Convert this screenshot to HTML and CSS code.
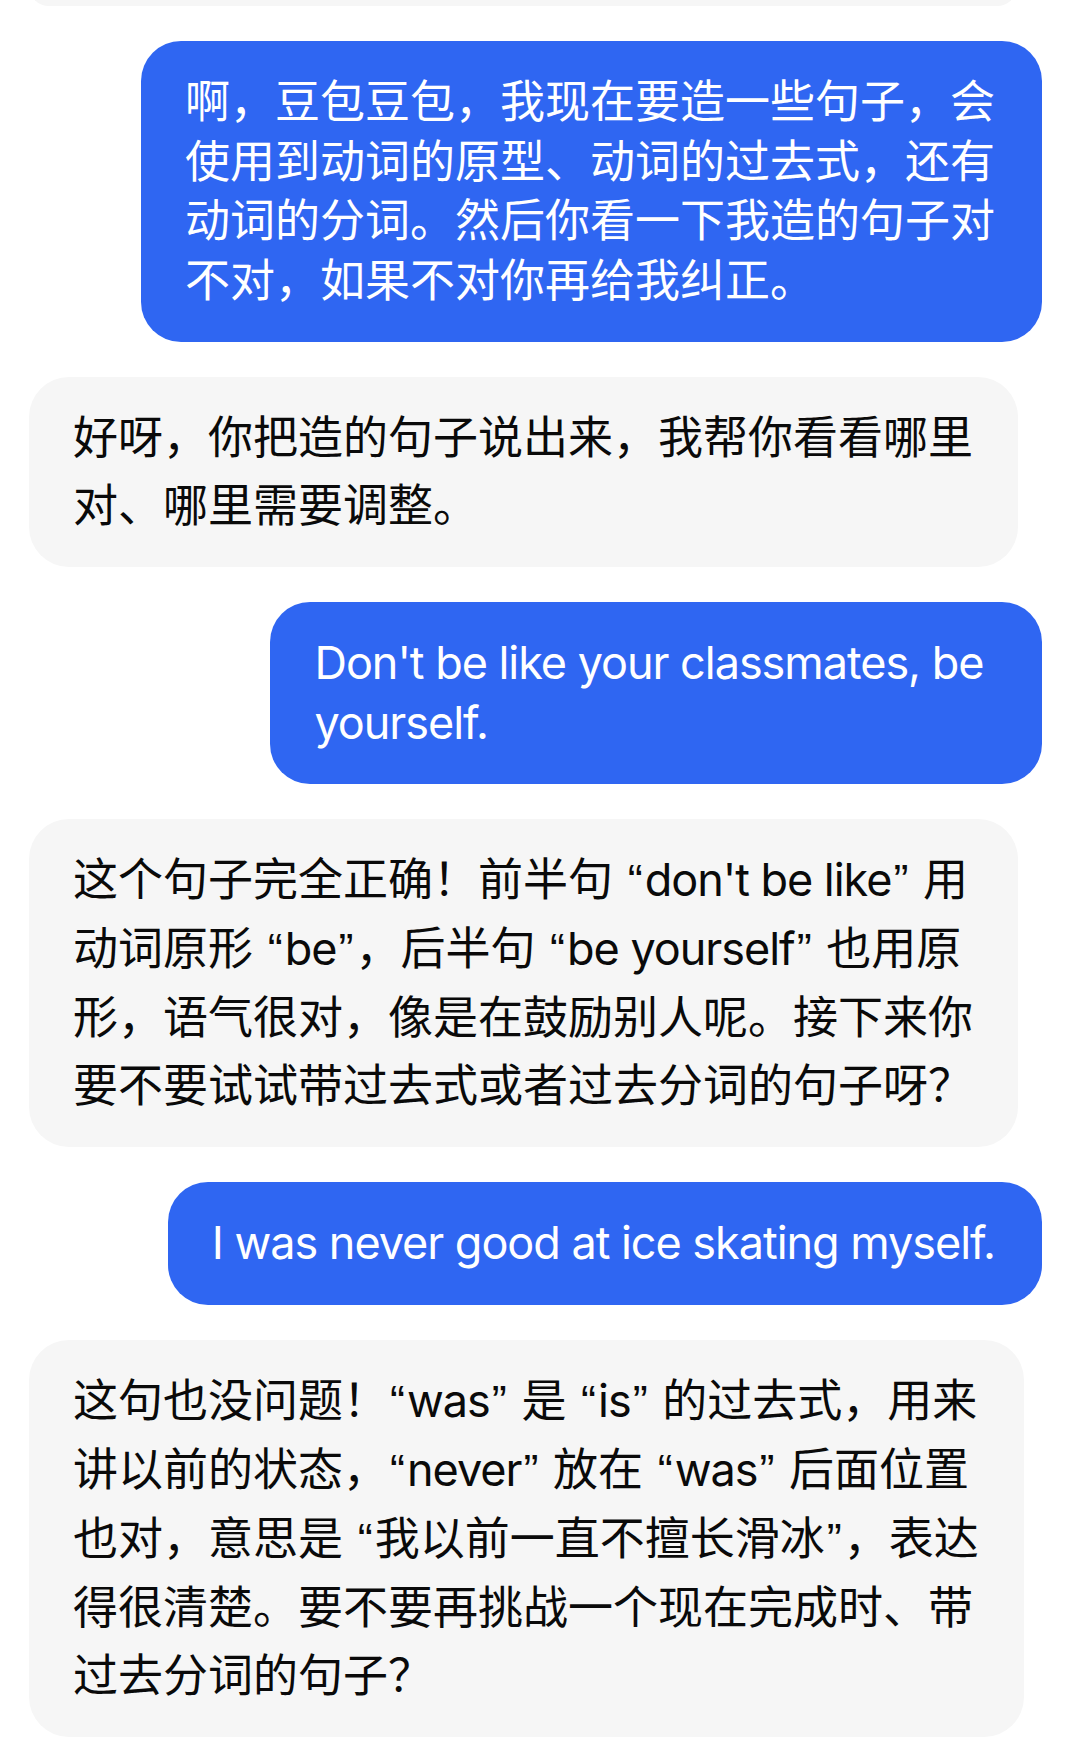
FILE: index.html
```html
<!DOCTYPE html>
<html lang="zh-CN">
<head>
<meta charset="utf-8">
<title>Chat</title>
<link rel="stylesheet" href="styles.css">
</head>
<body>
<div class="chat">
  <div class="msg bot peek"></div>
  <div class="msg user">啊，豆包豆包，我现在要造一些句子，会<br>使用到动词的原型、动词的过去式，还有<br>动词的分词。然后你看一下我造的句子对<br>不对，如果不对你再给我纠正。</div>
  <div class="msg bot">好呀，你把造的句子说出来，我帮你看看哪里<br>对、哪里需要调整。</div>
  <div class="msg user en">Don't be like your classmates, be&nbsp;<br>yourself.</div>
  <div class="msg bot">这个句子完全正确！前半句 <span class="q">“</span><span class="en">don't be like</span><span class="q">”</span> 用<br>动词原形 <span class="q">“</span><span class="en">be</span><span class="q">”</span>，后半句 <span class="q">“</span><span class="en">be yourself</span><span class="q">”</span> 也用原<br>形，语气很对，像是在鼓励别人呢。接下来你<br>要不要试试带过去式或者过去分词的句子呀？</div>
  <div class="msg user en">I was never good at ice skating myself.</div>
  <div class="msg bot">这句也没问题！<span class="q">“</span><span class="en">was</span><span class="q">”</span> 是 <span class="q">“</span><span class="en">is</span><span class="q">”</span> 的过去式，用来<br>讲以前的状态，<span class="q">“</span><span class="en">never</span><span class="q">”</span> 放在 <span class="q">“</span><span class="en">was</span><span class="q">”</span> 后面位置<br>也对，意思是 <span class="q">“</span>我以前一直不擅长滑冰<span class="q">”</span>，表达<br>得很清楚。要不要再挑战一个现在完成时、带<br>过去分词的句子？</div>
</div>
</body>
</html>
```

FILE: styles.css
```css
html, body {
  margin: 0;
  padding: 0;
  background: #ffffff;
}

body {
  font-family: "Inter", "Noto Sans CJK SC", sans-serif;
  font-size: 45px;
  -webkit-font-smoothing: antialiased;
}

.chat {
  display: flex;
  flex-direction: column;
  gap: 35px;
  padding: 0 34px 40px 29px;
  margin-top: -34px;
}

.msg {
  width: fit-content;
  max-width: 1010px;
  border-radius: 40px;
  box-sizing: border-box;
  white-space: nowrap;
}

.user {
  align-self: flex-end;
  background: #2f66f2;
  color: #ffffff;
  line-height: 59.5px;
  padding: 31px 47px 32px 44px;
}

.bot {
  align-self: flex-start;
  background: #f6f6f6;
  color: #0a0a0a;
  line-height: 68px;
  padding: 27px 45px 27px 44px;
}

.en {
  letter-spacing: -0.023em;
}

.q {
  font-family: "Liberation Sans", "Noto Sans CJK SC", sans-serif;
  padding: 0 2px;
}

.peek {
  width: 988px;
  height: 40px;
  padding: 0;
}
```
